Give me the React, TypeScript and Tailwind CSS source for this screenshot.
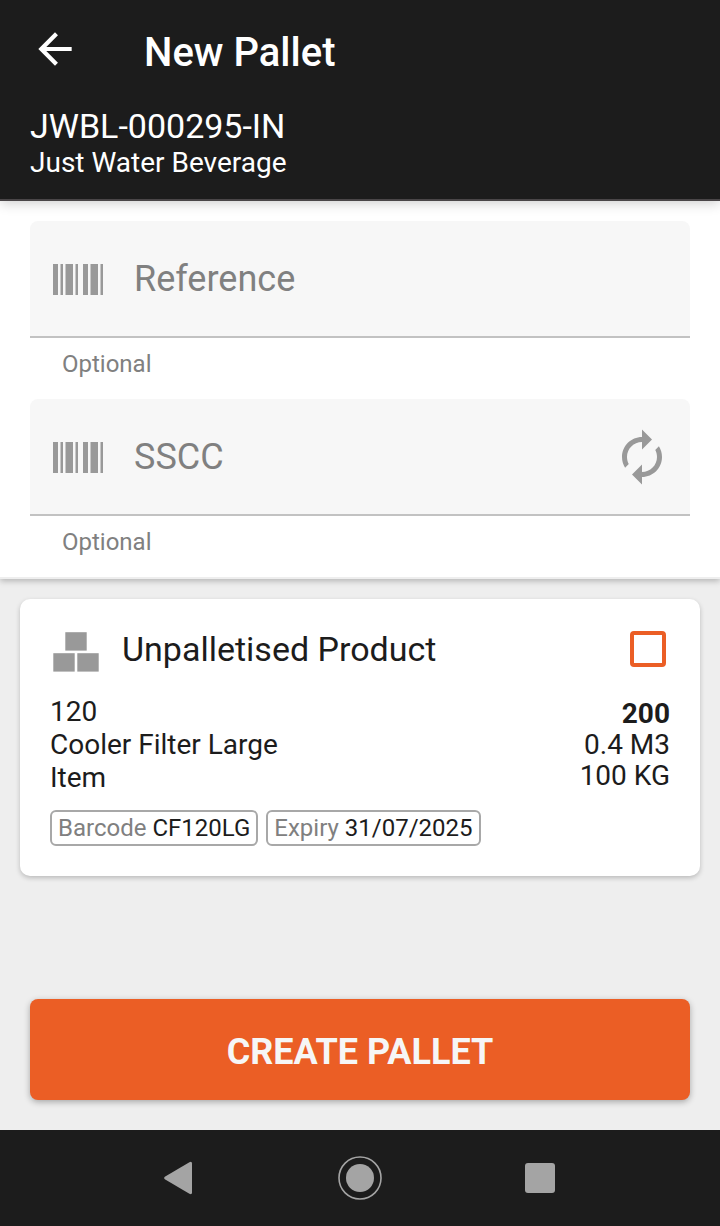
import React, { useState } from "react";

const product = {
  title: "Unpalletised Product",
  code: "120",
  name: "Cooler Filter Large",
  unit: "Item",
  quantity: "200",
  volume: "0.4 M3",
  weight: "100 KG",
};

const tags = [
  { label: "Barcode", value: "CF120LG" },
  { label: "Expiry", value: "31/07/2025" },
];

function BackIcon() {
  return (
    <svg viewBox="0 0 24 24" className="size-[50px]" fill="currentColor">
      <path d="M20 11H7.83l5.59-5.59L12 4l-8 8 8 8 1.41-1.41L7.83 13H20v-2z" />
    </svg>
  );
}

function BarcodeIcon() {
  return (
    <svg
      viewBox="0 0 20 12"
      preserveAspectRatio="none"
      className="h-[31px] w-[50px] shrink-0"
      fill="#999999"
    >
      <path d="M0 0h2v12H0zM3 0h1v12H3zM5 0h3v12H5zM9 0h1v12H9zM12 0h2v12h-2zM15 0h3v12h-3zM19 0h1v12h-1z" />
    </svg>
  );
}

function RenewIcon() {
  return (
    <svg viewBox="0 0 24 24" className="size-[60px]" fill="#999999">
      <path d="M12 6v3l4-4-4-4v3c-4.42 0-8 3.58-8 8 0 1.57.46 3.03 1.24 4.26L6.7 14.8c-.45-.83-.7-1.79-.7-2.8 0-3.31 2.69-6 6-6zm6.76 1.74L17.3 9.2c.44.84.7 1.79.7 2.8 0 3.31-2.69 6-6 6v-3l-4 4 4 4v-3c4.42 0 8-3.58 8-8 0-1.57-.46-3.03-1.24-4.26z" />
    </svg>
  );
}

function BoxesIcon() {
  return (
    <svg viewBox="0 0 52 46" className="h-[46px] w-[52px]" fill="#999999">
      <rect x="15.3" y="6.2" width="21.4" height="18.4" />
      <rect x="3.3" y="27.2" width="21.4" height="18.4" />
      <rect x="27.3" y="27.2" width="21.4" height="18.4" />
    </svg>
  );
}

function Field({
  id,
  label,
  children,
}: {
  id: string;
  label: string;
  children?: React.ReactNode;
}) {
  return (
    <div>
      <div className="relative flex h-[117px] items-center rounded-t-lg border-b-2 border-[#c2c2c2] bg-[#f7f7f7] pt-px pr-[18px] pl-[23px]">
        <input
          id={id}
          placeholder=" "
          className="peer absolute inset-0 w-full bg-transparent pr-20 pl-[104px] text-4xl text-[#1c1c1c] outline-none"
        />
        <BarcodeIcon />
        <label
          htmlFor={id}
          className="pointer-events-none ml-[31px] grow text-4xl text-[#808080] peer-[:not(:placeholder-shown)]:invisible"
        >
          {label}
        </label>
        {children}
      </div>
      <p className="pt-3 pb-5 pl-8 text-2xl leading-[29px] text-[#808080]">
        Optional
      </p>
    </div>
  );
}

function Header() {
  return (
    <header className="relative z-10 border-b-2 border-[#4a4648] bg-[#1c1c1c] px-[30px] pt-6 pb-5 text-white shadow-[0_2px_12px_rgba(0,0,0,0.2)]">
      <div className="flex h-[82px] items-start">
        <button type="button" aria-label="Back">
          <BackIcon />
        </button>
        <h1 className="ml-16 text-[40px] leading-[58px] font-medium">
          New Pallet
        </h1>
      </div>
      <p className="text-[34px] leading-10">JWBL-000295-IN</p>
      <p className="text-[28px] leading-[33px]">Just Water Beverage</p>
    </header>
  );
}

function ProductCard() {
  const [checked, setChecked] = useState(false);

  return (
    <section className="m-5 rounded-[10px] bg-white p-[30px] text-[28px] shadow-[0_2px_5px_rgba(0,0,0,0.22)]">
      <div className="flex h-10 items-center">
        <BoxesIcon />
        <label htmlFor="product" className="ml-5 grow text-[34px] leading-10">
          {product.title}
        </label>
        <input
          id="product"
          type="checkbox"
          checked={checked}
          onChange={() => setChecked(!checked)}
          className="mr-1 size-9 appearance-none rounded-sm border-4 border-[#eb5e25] checked:bg-[#eb5e25]"
        />
      </div>
      <div className="mt-[26px] flex items-center justify-between">
        <div className="leading-[33px]">
          <p>{product.code}</p>
          <p>{product.name}</p>
          <p>{product.unit}</p>
        </div>
        <div className="text-right leading-[31px]">
          <p className="font-bold">{product.quantity}</p>
          <p>{product.volume}</p>
          <p>{product.weight}</p>
        </div>
      </div>
      <div className="mt-4 flex gap-2">
        {tags.map((tag) => (
          <p
            key={tag.label}
            className="rounded-md border-2 border-[#a8a8a8] px-1.5 text-2xl leading-8"
          >
            <span className="text-[#808080]">{tag.label}</span> {tag.value}
          </p>
        ))}
      </div>
    </section>
  );
}

function NavBar() {
  return (
    <nav className="grid h-24 grid-cols-3 place-items-center bg-[#1c1c1c] px-[12.5%] text-[#a4a4a4]">
      <button type="button" aria-label="Back">
        <svg viewBox="0 0 44 44" className="size-11" fill="currentColor">
          <path d="M6.8 20.8 31.4 6.3Q34 5 34 7.5v29Q34 39 31.4 37.7L6.8 23.2Q5.2 22 6.8 20.8z" />
        </svg>
      </button>
      <button type="button" aria-label="Home">
        <svg viewBox="0 0 44 44" className="size-11" fill="currentColor">
          <circle cx="22" cy="22" r="14" />
          <circle
            cx="22"
            cy="22"
            r="21"
            fill="none"
            stroke="currentColor"
            strokeWidth="1.6"
          />
        </svg>
      </button>
      <button type="button" aria-label="Recent apps">
        <svg viewBox="0 0 44 44" className="size-11" fill="currentColor">
          <rect x="7" y="7" width="30" height="30" rx="3" />
        </svg>
      </button>
    </nav>
  );
}

function App() {
  return (
    <div className="flex min-h-screen flex-col bg-[#eeeeee] font-['Roboto',sans-serif] text-[#1c1c1c]">
      <Header />

      <form className="border-b-2 border-[#eeeeee] bg-white px-[30px] pt-5 shadow-[0_2px_6px_rgba(0,0,0,0.25)]">
        <Field id="reference" label="Reference" />
        <Field id="sscc" label="SSCC">
          <button type="button" aria-label="Generate" className="relative">
            <RenewIcon />
          </button>
        </Field>
      </form>

      <main className="flex grow flex-col justify-between">
        <ProductCard />
        <button
          type="button"
          className="m-[30px] h-[101px] rounded-lg bg-[#eb5e25] pt-1 text-4xl font-bold text-[#f6f6f6] shadow-[0_2px_6px_rgba(0,0,0,0.3)]"
        >
          CREATE PALLET
        </button>
      </main>

      <NavBar />
    </div>
  );
}

export default App;
